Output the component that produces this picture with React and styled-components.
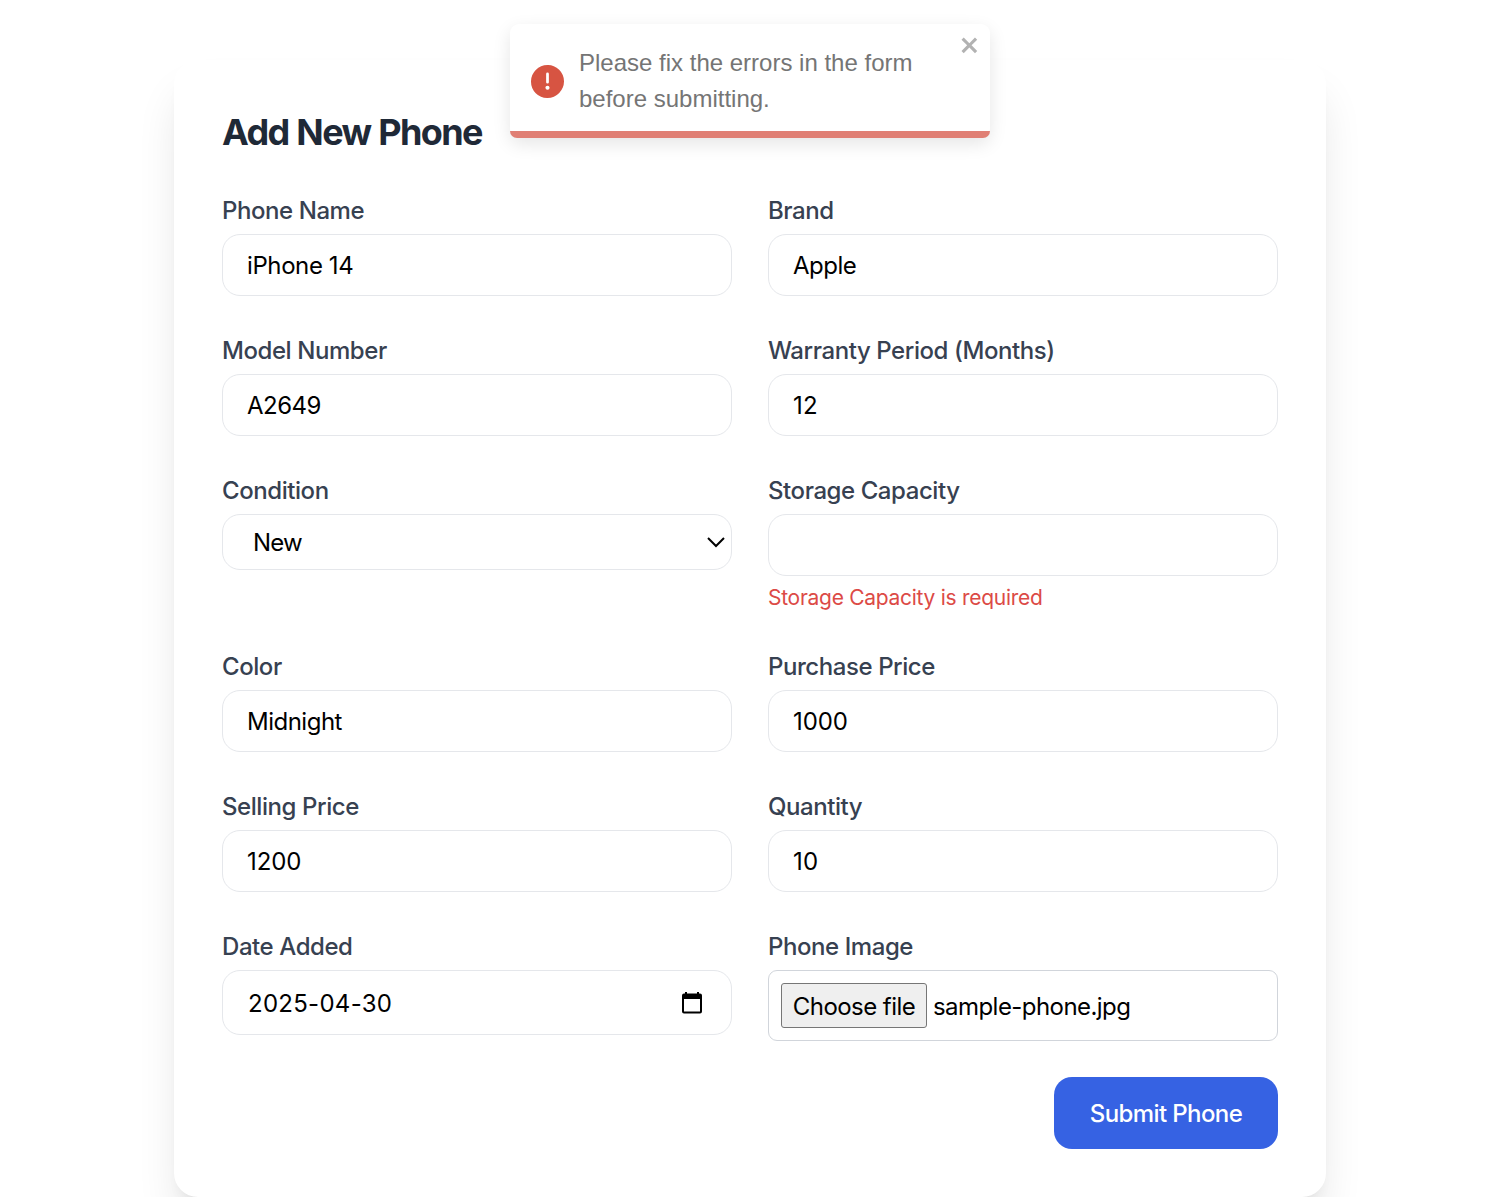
import React from "react";
import styled, { createGlobalStyle } from "styled-components";

const Global = createGlobalStyle`
  *, *::before, *::after { box-sizing: border-box; }
  body { margin: 0; background: #fff; height: 1197px; overflow: hidden; font-family: Inter, "Liberation Sans", sans-serif; }
`;

const Page = styled.main`
  display: flex;
  justify-content: center;
  padding-top: 60px;
  height: 1197px;
  overflow: hidden;
`;

const Card = styled.form`
  width: 1152px;
  height: 1137px;
  padding: 48px;
  border-radius: 24px;
  background: #fff;
  box-shadow: 0 30px 46px -8px rgba(0, 0, 0, 0.12), 0 12px 15px -9px rgba(0, 0, 0, 0.08);
`;

const Title = styled.h1`
  margin: 0 0 36px;
  font-size: 36px;
  line-height: 48px;
  font-weight: 700;
  letter-spacing: -1.6px;
  word-spacing: 0.8px;
  color: #1f2937;
`;

const Grid = styled.div`
  display: grid;
  grid-template-columns: 1fr 1fr;
  gap: 36px;
`;

const Field = styled.label`
  display: flex;
  flex-direction: column;
`;

const Caption = styled.span`
  height: 42px;
  line-height: 37px;
  font-size: 24px;
  font-weight: 500;
  color: #374151;
  letter-spacing: -0.43px;
`;

const Box = styled.span`
  display: flex;
  align-items: center;
  height: ${(p) => p.$height || 62}px;
  padding: 0 24px;
  border: 1px solid #e5e7eb;
  border-radius: 18px;
  font-size: 24px;
  color: #000;
  letter-spacing: ${(p) => p.$spacing || "-0.5px"};
`;

const SelectBox = styled(Box)`
  justify-content: space-between;
  padding: 0 6px 0 30px;
`;

const DateBox = styled(Box)`
  justify-content: space-between;
  padding: 2px 28px 0 25px;
`;

const FileBox = styled(Box)`
  gap: 6px;
  padding: 0 12px;
  border-color: #d1d5db;
  border-radius: 9px;
`;

const FileButton = styled.span`
  width: 146px;
  height: 45px;
  border: 1px solid #767676;
  border-radius: 3px;
  background: #efefef;
  line-height: 46px;
  text-align: center;
`;

const FileName = styled.span`
  padding-top: 2px;
`;

const ErrorText = styled.span`
  height: 36px;
  padding-top: 6px;
  line-height: 32px;
  font-size: 21px;
  letter-spacing: -0.28px;
  color: #dc4a46;
`;

const Actions = styled.div`
  display: flex;
  justify-content: flex-end;
  margin-top: 36px;
`;

const Submit = styled.button`
  width: 224px;
  height: 72px;
  padding: 0;
  border: 0;
  border-radius: 18px;
  background: #3662e3;
  color: #fff;
  font: 500 24px Inter, sans-serif;
  letter-spacing: -0.6px;
`;

const Toast = styled.div`
  position: absolute;
  top: 24px;
  left: 510px;
  width: 480px;
  height: 114px;
  display: flex;
  align-items: center;
  padding: 0 21px;
  gap: 15px;
  border-radius: 9px;
  background: #fff;
  box-shadow: 0 6px 18px rgba(0, 0, 0, 0.1);
`;

const ToastText = styled.div`
  font: 24px/36px "Liberation Sans", Arial, sans-serif;
  color: #757575;
`;

const Progress = styled.div`
  position: absolute;
  left: 0;
  right: 0;
  bottom: 0;
  height: 7px;
  border-radius: 0 0 7px 7px;
  background: #e07f74;
`;

const CloseIcon = styled.svg`
  position: absolute;
  top: 9px;
  right: 9px;
`;

function TextField({ label, value, error, spacing }) {
  return (
    <Field>
      <Caption>{label}</Caption>
      <Box $spacing={spacing}>{value}</Box>
      {error && <ErrorText>{error}</ErrorText>}
    </Field>
  );
}

export default function App() {
  return (
    <>
      <Global />
      <Page>
        <Card>
          <Title>Add New Phone</Title>
          <Grid>
            <TextField label="Phone Name" value="iPhone 14" spacing="-0.4px" />
            <TextField label="Brand" value="Apple" />
            <TextField label="Model Number" value="A2649" />
            <TextField label="Warranty Period (Months)" value="12" spacing="0.2px" />
            <Field>
              <Caption>Condition</Caption>
              <SelectBox $height={56} $spacing="-0.8px">
                New
                <svg width="18" height="12" viewBox="0 0 18 12" fill="none">
                  <path d="M1 2L9 10L17 2" stroke="#000" strokeWidth="2" />
                </svg>
              </SelectBox>
            </Field>
            <TextField label="Storage Capacity" value="" error="Storage Capacity is required" />
            <TextField label="Color" value="Midnight" />
            <TextField label="Purchase Price" value="1000" spacing="-0.1px" />
            <TextField label="Selling Price" value="1200" spacing="-0.1px" />
            <TextField label="Quantity" value="10" spacing="0.2px" />
            <Field>
              <Caption>Date Added</Caption>
              <DateBox $height={65} $spacing="0.28px">
                2025-04-30
                <svg width="22" height="23" viewBox="0 0 22 23">
                  <path d="M5 0v3M17 0v3" stroke="#000" strokeWidth="2" />
                  <path fillRule="evenodd" d="M3 1.500h16q2 0 2 2V19.500q0 2-2 2H3q-2 0-2-2V3.500q0-2 2-2zM3 7v12.500h16V7z" />
                </svg>
              </DateBox>
            </Field>
            <Field>
              <Caption>Phone Image</Caption>
              <FileBox $height={71} $spacing="-0.56px">
                <FileButton>Choose file</FileButton>
                <FileName>sample-phone.jpg</FileName>
              </FileBox>
            </Field>
          </Grid>
          <Actions>
            <Submit type="button">Submit Phone</Submit>
          </Actions>
        </Card>
      </Page>
      <Toast role="alert">
        <svg width="33" height="33" viewBox="0 0 24 24" fill="#d75442">
          <path d="M11.983 0a12.206 12.206 0 00-8.51 3.653A11.8 11.8 0 000 12.207 11.779 11.779 0 0011.8 24h.214A12.111 12.111 0 0024 11.791 11.766 11.766 0 0011.983 0zM10.5 16.542a1.476 1.476 0 011.449-1.53h.027a1.527 1.527 0 011.523 1.47 1.475 1.475 0 01-1.449 1.53h-.027a1.529 1.529 0 01-1.523-1.47zM11 12.5v-6a1 1 0 012 0v6a1 1 0 11-2 0z" />
        </svg>
        <ToastText>Please fix the errors in the form<br />before submitting.</ToastText>
        <Progress />
        <CloseIcon width="21" height="24" viewBox="0 0 14 16" fill="#b2b2b2">
          <path fillRule="evenodd" d="M7.71 8.23l3.75 3.75-1.48 1.48-3.75-3.75-3.75 3.75L1 11.98l3.75-3.75L1 4.48 2.48 3l3.75 3.75L9.98 3l1.48 1.48-3.75 3.75z" />
        </CloseIcon>
      </Toast>
    </>
  );
}
